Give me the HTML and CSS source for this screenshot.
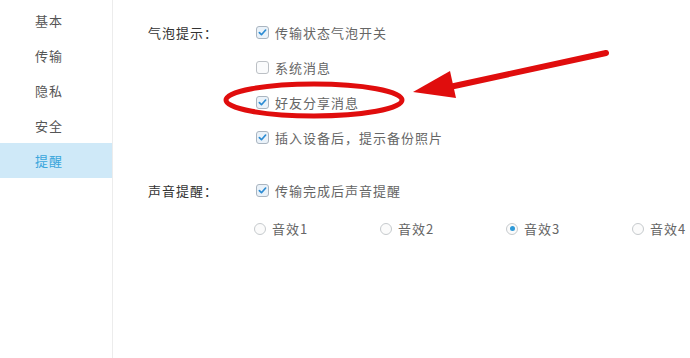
FILE: index.html
```html
<!DOCTYPE html>
<html lang="zh-CN">
<head>
<meta charset="utf-8">
<title>设置 - 提醒</title>
<link rel="stylesheet" href="styles.css">
</head>
<body>
<div class="window">
  <nav class="sidebar">
    <div class="nav-item">基本</div>
    <div class="nav-item">传输</div>
    <div class="nav-item">隐私</div>
    <div class="nav-item">安全</div>
    <div class="nav-item active">提醒</div>
  </nav>
  <main class="content">
    <section class="group">
      <div class="label">气泡提示：</div>
      <div class="options">
        <div class="row"><span class="cb checked"><svg viewBox="0 0 13 13"><path d="M2.8 6.6 L5.3 9.1 L10.2 3.6"/></svg></span><span class="text">传输状态气泡开关</span></div>
        <div class="row"><span class="cb"></span><span class="text">系统消息</span></div>
        <div class="row"><span class="cb checked"><svg viewBox="0 0 13 13"><path d="M2.8 6.6 L5.3 9.1 L10.2 3.6"/></svg></span><span class="text">好友分享消息</span></div>
        <div class="row"><span class="cb checked"><svg viewBox="0 0 13 13"><path d="M2.8 6.6 L5.3 9.1 L10.2 3.6"/></svg></span><span class="text">插入设备后，提示备份照片</span></div>
      </div>
    </section>
    <section class="group second">
      <div class="label">声音提醒：</div>
      <div class="options">
        <div class="row"><span class="cb checked"><svg viewBox="0 0 13 13"><path d="M2.8 6.6 L5.3 9.1 L10.2 3.6"/></svg></span><span class="text">传输完成后声音提醒</span></div>
        <div class="radios">
          <div class="radio-item"><span class="rd"></span><span class="text">音效1</span></div>
          <div class="radio-item"><span class="rd"></span><span class="text">音效2</span></div>
          <div class="radio-item"><span class="rd on"></span><span class="text">音效3</span></div>
          <div class="radio-item"><span class="rd"></span><span class="text">音效4</span></div>
        </div>
      </div>
    </section>
  </main>
  <svg class="annotation" viewBox="0 0 690 358" width="690" height="358">
    <ellipse cx="314" cy="100" rx="88" ry="16" fill="none" stroke="#e00d0d" stroke-width="5"/>
    <line x1="606" y1="53" x2="445" y2="88" stroke="#e00d0d" stroke-width="6" stroke-linecap="round"/>
    <polygon points="413,92 450,71 456,98" fill="#e00d0d"/>
  </svg>
</div>
</body>
</html>
```

FILE: styles.css
```css
* { box-sizing: border-box; }
html, body {
  margin: 0;
  padding: 0;
  background: #ffffff;
}
body {
  font-family: "Noto Sans CJK SC", "Noto Sans", sans-serif;
  font-size: 13px;
  letter-spacing: 1px;
  color: #555;
}
.window {
  position: relative;
  display: flex;
  width: 690px;
  height: 358px;
  overflow: hidden;
}
.sidebar {
  width: 113px;
  flex: none;
  border-right: 1px solid #ececec;
  padding-top: 3px;
  background: #fff;
}
.nav-item {
  height: 35px;
  line-height: 35px;
  padding-left: 35px;
  color: #555;
}
.nav-item.active {
  background: #cfe9f8;
  color: #3aa6dc;
}
.content {
  flex: 1;
  padding: 15px 0 0 35px;
}
.group {
  display: flex;
}
.group.second {
  margin-top: 18px;
}
.label {
  width: 108px;
  flex: none;
  height: 35px;
  line-height: 35px;
  color: #333;
}
.options {
  display: flex;
  flex-direction: column;
}
.row {
  height: 35px;
  display: flex;
  align-items: center;
}
.cb {
  width: 13px;
  height: 13px;
  border: 1px solid #bcc0c5;
  border-radius: 3px;
  background: #fafbfc;
  margin-right: 6px;
  display: flex;
  flex: none;
}
.cb.checked {
  background: #eaf2f9;
  border-color: #aab5c0;
}
.cb svg {
  width: 11px;
  height: 11px;
}
.cb svg path {
  fill: none;
  stroke: #2b8bd3;
  stroke-width: 2;
  stroke-linecap: round;
  stroke-linejoin: round;
}
.text {
  color: #666;
}
.radios {
  display: flex;
  height: 41px;
  align-items: center;
  margin-left: -2px;
}
.radio-item {
  width: 126px;
  display: flex;
  align-items: center;
}
.rd {
  width: 12px;
  height: 12px;
  border: 1px solid #c6cacd;
  border-radius: 50%;
  background: #fbfbfb;
  margin-right: 6px;
  display: flex;
  align-items: center;
  justify-content: center;
  flex: none;
}
.rd.on::after {
  content: "";
  width: 5px;
  height: 5px;
  border-radius: 50%;
  background: #2f9ad8;
}
.annotation {
  position: absolute;
  left: 0;
  top: 0;
  pointer-events: none;
}
```
